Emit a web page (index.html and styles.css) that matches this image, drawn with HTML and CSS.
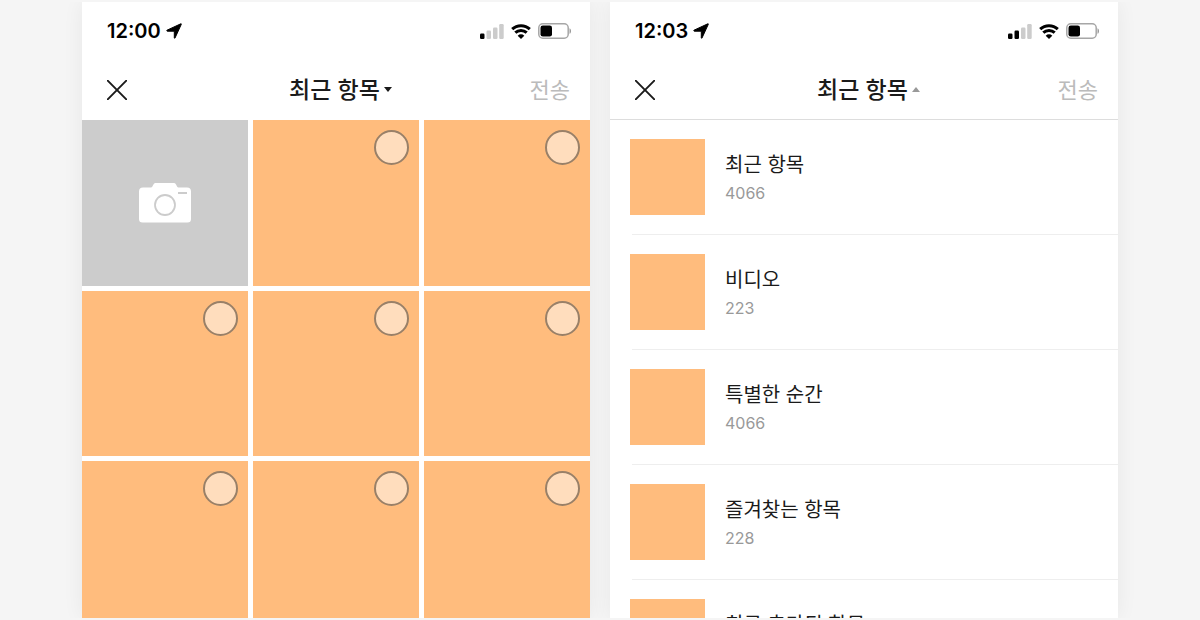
FILE: index.html
```
<!DOCTYPE html>
<html lang="ko">
<head>
<meta charset="utf-8">
<meta name="viewport" content="width=device-width, initial-scale=1">
<title>최근 항목</title>
<link rel="stylesheet" href="styles.css">
</head>
<body>
	<svg width="0" height="0" class="symbols" aria-hidden="true">
		<symbol id="arrow" viewBox="0 0 16 16">
			<path d="M1 7.200 14.800.8c.4-.2.700.1.500.500L9 15c-.2.400-.7.300-.7-.2V8.200H1.300C.7 8.200.6 7.400 1 7.200Z" stroke="#000" stroke-linejoin="round"/>
		</symbol>
		<symbol id="wifi" viewBox="0 0 20 15">
			<path d="M1.200 5.200a12.700 12.700 0 0 1 17.600 0M4.300 8.700a8.200 8.200 0 0 1 11.400 0" fill="none" stroke="currentColor" stroke-width="3"/>
			<path d="M10 15 6.700 11.700a4.700 4.700 0 0 1 6.600 0Z"/>
		</symbol>
		<symbol id="battery" viewBox="0 0 34 16">
			<rect x=".8" y=".8" width="29.400" height="14.400" rx="4" fill="none" stroke="#a6a6a6" stroke-width="1.500"/>
			<rect x="2.500" y="2.500" width="11.500" height="11" rx="2.300"/>
			<path d="M31.500 5.200c2 .8 2 4.800 0 5.600Z" fill="#999"/>
		</symbol>
		<symbol id="cross" viewBox="0 0 20 20">
			<path d="m.7.7 18.600 18.600m0-18.600L.7 19.300" fill="none" stroke="#1a1a1a" stroke-width="1.900" stroke-linecap="round"/>
		</symbol>
	</svg>

	<main class="stage">
		<section class="phone">
			<div class="status">
				<span class="time">12:00</span>
				<svg class="arrow"><use href="#arrow"/></svg>
				<svg class="signal" viewBox="0 0 24 15">
					<rect x="0" y="9.500" width="4.500" height="5.500" rx="1.200"/>
					<rect class="off" x="6.500" y="6.500" width="4.500" height="8.500" rx="1.200"/>
					<rect class="off" x="13" y="3.500" width="4.500" height="11.500" rx="1.200"/>
					<rect class="off" x="19.200" y="0" width="4.500" height="15" rx="1.200"/>
				</svg>
				<svg class="wifi"><use href="#wifi"/></svg>
				<svg class="battery"><use href="#battery"/></svg>
			</div>
			<header class="bar">
				<button class="close" aria-label="닫기"><svg><use href="#cross"/></svg></button>
				<button class="album"><span>최근 항목</span><svg viewBox="0 0 8 5"><path d="M0 0h8L4 5Z"/></svg></button>
				<button class="send" disabled>전송</button>
			</header>
			<div class="photos">
				<button class="camera" aria-label="카메라">
					<svg viewBox="0 0 52 40">
						<path d="M4 4.500h8c2.200 0 1.800-4.500 4.500-4.500H35c2.700 0 2.300 4.500 4.500 4.500H48a4 4 0 0 1 4 4V36a3.500 3.500 0 0 1-3.500 3.500h-45A3.500 3.500 0 0 1 0 36V8.500a4 4 0 0 1 4-4Z" fill="#fff"/>
						<circle cx="26" cy="22" r="10" fill="none" stroke="#ccc" stroke-width="1.800"/>
						<path d="M39 10h9" stroke="#ccc" stroke-width="2"/>
					</svg>
				</button>
				<label class="photo"><input type="checkbox" aria-label="사진 1"></label>
				<label class="photo"><input type="checkbox" aria-label="사진 2"></label>
				<label class="photo"><input type="checkbox" aria-label="사진 3"></label>
				<label class="photo"><input type="checkbox" aria-label="사진 4"></label>
				<label class="photo"><input type="checkbox" aria-label="사진 5"></label>
				<label class="photo"><input type="checkbox" aria-label="사진 6"></label>
				<label class="photo"><input type="checkbox" aria-label="사진 7"></label>
				<label class="photo"><input type="checkbox" aria-label="사진 8"></label>
			</div>
		</section>

		<section class="phone">
			<div class="status">
				<span class="time">12:03</span>
				<svg class="arrow"><use href="#arrow"/></svg>
				<svg class="signal" viewBox="0 0 24 15">
					<rect x="0" y="9.500" width="4.500" height="5.500" rx="1.200"/>
					<rect x="6.500" y="6.500" width="4.500" height="8.500" rx="1.200"/>
					<rect class="off" x="13" y="3.500" width="4.500" height="11.500" rx="1.200"/>
					<rect class="off" x="19.200" y="0" width="4.500" height="15" rx="1.200"/>
				</svg>
				<svg class="wifi"><use href="#wifi"/></svg>
				<svg class="battery"><use href="#battery"/></svg>
			</div>
			<header class="bar lined">
				<button class="close" aria-label="닫기"><svg><use href="#cross"/></svg></button>
				<button class="album open"><span>최근 항목</span><svg viewBox="0 0 8 5"><path d="M0 5h8L4 0Z"/></svg></button>
				<button class="send" disabled>전송</button>
			</header>
			<ul class="albums">
				<li>
					<div class="thumb"></div>
					<div><div class="name">최근 항목</div><div class="count">4066</div></div>
				</li>
				<li>
					<div class="thumb"></div>
					<div><div class="name">비디오</div><div class="count">223</div></div>
				</li>
				<li>
					<div class="thumb"></div>
					<div><div class="name">특별한 순간</div><div class="count">4066</div></div>
				</li>
				<li>
					<div class="thumb"></div>
					<div><div class="name">즐겨찾는 항목</div><div class="count">228</div></div>
				</li>
				<li>
					<div class="thumb"></div>
					<div><div class="name">최근 추가된 항목</div></div>
				</li>
			</ul>
		</section>
	</main>
</body>
</html>
```
FILE: styles.css
```
* {
	box-sizing: border-box;
}
body {
	margin: 0;
	padding: 2px 0;
	height: 100vh;
	background-color: #f5f5f5;
	font-family: Inter, "Noto Sans CJK KR", sans-serif;
	color: #1a1a1a;
}
button {
	padding: 0;
	border: 0;
	background: none;
	font-family: inherit;
	color: inherit;
}
.symbols {
	position: absolute;
}
.stage {
	display: flex;
	gap: 20px;
	height: 100%;
	padding: 0 82px;
	overflow: hidden;
}
.phone {
	flex: 1;
	min-width: 0;
	overflow: hidden;
	background-color: #fff;
	box-shadow: 0 0 20px rgba(0, 0, 0, 0.06);
}

/* status bar */
.status {
	display: flex;
	align-items: center;
	height: 58px;
	padding: 0 18px 0 25px;
	color: #000;
}
.time {
	font-size: 20px;
	font-weight: 600;
}
.arrow {
	width: 16px;
	height: 16px;
	margin-left: 5px;
}
.signal {
	width: 24px;
	height: 15px;
	margin-left: auto;
}
.signal .off {
	fill: #ccc;
}
.wifi {
	width: 20px;
	height: 15px;
	margin: 0 7px;
}
.battery {
	width: 34px;
	height: 16px;
}

/* title bar */
.bar {
	display: grid;
	grid-template-columns: 1fr auto 1fr;
	align-items: center;
	height: 60px;
	padding: 0 20px 0 25px;
	border-bottom: 1px solid #fff;
}
.lined {
	border-color: #ddd;
}
.close {
	justify-self: start;
	height: 20px;
}
.close svg {
	display: block;
	width: 20px;
	height: 20px;
}
.album {
	display: flex;
	align-items: center;
	gap: 4px;
	padding-left: 4px;
	font-size: 23px;
	font-weight: 500;
}
.album span,
.send {
	padding-bottom: 4px;
}
.album svg {
	width: 8px;
	height: 5px;
	fill: #1a1a1a;
}
.open svg {
	fill: #999;
}
.send {
	justify-self: end;
	font-size: 22px;
	color: #bbb;
}

/* photo grid */
.photos {
	display: grid;
	grid-template-columns: repeat(3, 1fr);
	gap: 5px;
}
.camera,
.photo {
	display: flex;
	aspect-ratio: 332 / 331;
}
.camera {
	align-items: center;
	justify-content: center;
	background-color: #ccc;
}
.camera svg {
	width: 52px;
	height: 40px;
}
.photo {
	align-items: flex-start;
	justify-content: flex-end;
	padding: 10px;
	background-color: #ffbc7d;
}
.photo input {
	appearance: none;
	width: 35px;
	height: 35px;
	margin: 0;
	border: 2px solid #998068;
	border-radius: 50%;
	background-color: #ffddbd;
}
.photo input:checked {
	background-color: #ffe500;
}

/* album list */
.albums {
	margin: 0;
	padding: 0;
	list-style: none;
}
.albums li {
	display: flex;
	flex-wrap: wrap;
	gap: 0 20px;
	padding: 19px 0 0 20px;
}
.albums li::after {
	content: "";
	width: 100%;
	height: 1px;
	margin: 19px 0 0 2px;
	background-color: #eee;
}
.thumb {
	width: 75px;
	height: 76px;
	background-color: #ffbc7d;
}
.name {
	margin-top: 10px;
	font-size: 20px;
	line-height: 32px;
}
.count {
	font-size: 16px;
	line-height: 25px;
	color: #999;
}
```
